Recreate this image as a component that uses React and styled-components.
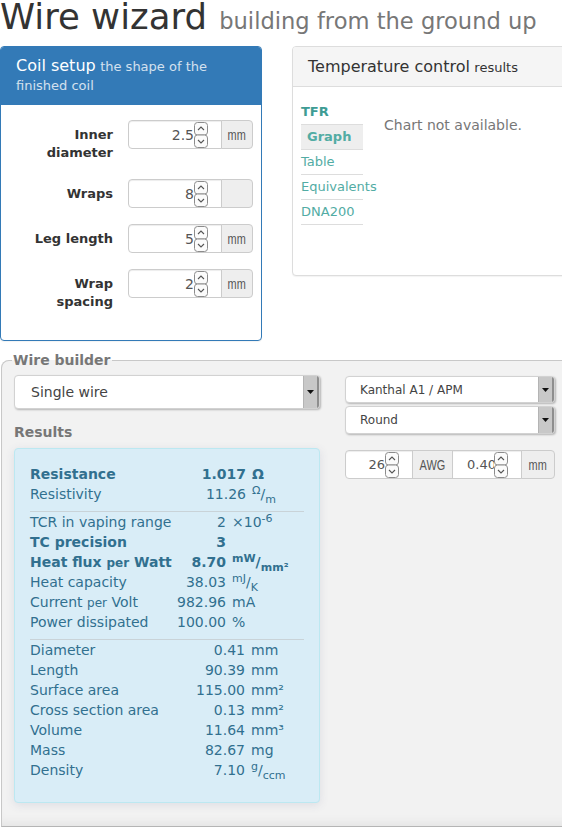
import React from 'react';
import styled, {createGlobalStyle} from 'styled-components';

const GlobalStyle = createGlobalStyle`
    html, body {
        margin: 0;
        padding: 0;
        overflow: hidden;
        background: #fff;
    }
    body {
        font-family: "DejaVu Sans", Verdana, sans-serif;
        font-size: 14px;
        color: #333;
    }
    * {
        box-sizing: border-box;
    }
`;

const Page = styled.div`
    width: 570px;
`;

const Title = styled.h1`
    height: 34px;
    margin: 0 0 12px;
    font-size: 35.5px;
    font-weight: normal;
    line-height: 34px;
    color: #333;
    white-space: nowrap;
`;

const Subtitle = styled.small`
    margin-left: 1px;
    font-size: 22.6px;
    line-height: 1;
    color: #777;
`;

const TopRow = styled.div`
    display: flex;
    align-items: flex-start;
    gap: 30px;
`;

const Panel = styled.div`
    width: ${p => p.$width}px;
    border: 1px solid ${p => p.$border};
    border-radius: 4px;
    background: #fff;
    box-shadow: 0 1px 1px rgba(0, 0, 0, .05);
`;

const PanelHeading = styled.div`
    padding: 10px 15px 9px;
    background: ${p => p.$bg};
    color: ${p => p.$color};
    border-bottom: 1px solid ${p => p.$border};
    border-radius: 3px 3px 0 0;
    line-height: ${p => p.$lh}px;
`;

const PanelTitle = styled.span`
    font-size: 16px;
`;

const PanelNote = styled.span`
    font-size: 13px;
    opacity: ${p => p.$faded ? 0.78 : 1};
`;

const CoilBody = styled.div`
    padding: 15px 8px 12px 0;
`;

const FormRow = styled.div`
    display: grid;
    grid-template-columns: 127px 125px;
    margin-bottom: 16px;
`;

const FormLabel = styled.label`
    padding: 6px 15px 1px 0;
    text-align: right;
    font-size: 13px;
    font-weight: bold;
    line-height: 18px;
    color: #333;
`;

const InputGroup = styled.div`
    display: flex;
    height: 29px;
    margin-top: ${p => p.$mt || 0}px;
`;

const NumberField = styled.div`
    display: flex;
    align-items: center;
    width: ${p => p.$w}px;
    padding: 0 13px 0 ${p => p.$pl}px;
    background: #fff;
    border: 1px solid #ccc;
    border-radius: ${p => p.$first ? '4px 0 0 4px' : '0'};
    margin-left: ${p => p.$first ? 0 : -1}px;
    font-size: ${p => p.$fs}px;
    color: #555;
    box-shadow: inset 0 1px 1px rgba(0, 0, 0, .075);
`;

const NumberValue = styled.span`
    flex: 1;
    min-width: 0;
    overflow: hidden;
    white-space: nowrap;
    text-align: right;
`;

const Addon = styled.span`
    display: flex;
    align-items: center;
    justify-content: center;
    width: ${p => p.$w}px;
    margin-left: -1px;
    background: #eee;
    border: 1px solid #ccc;
    border-radius: ${p => p.$last ? '0 4px 4px 0' : '0'};
    font-family: "Liberation Sans", Arial, sans-serif;
    font-size: 14px;
    color: #555;
`;

const NarrowText = styled.span`
    display: inline-block;
    transform: scaleX(.78);
`;

const TempBody = styled.div`
    display: flex;
    height: 188px;
    padding: 13px 8px 0;
`;

const PillNav = styled.ul`
    list-style: none;
    margin: 0;
    padding: 0;
    width: 62px;
    flex-shrink: 0;
`;

const Pill = styled.li`
    padding: 3px 0 3px ${p => p.$active ? 6 : 0}px;
    line-height: 18px;
    font-size: 13px;
    white-space: nowrap;
    font-weight: ${p => p.$bold ? 'bold' : 'normal'};
    color: ${p => p.$head ? '#3e9c94' : '#52aca4'};
    background: ${p => p.$active ? '#eee' : 'transparent'};
    border-bottom: 1px solid #ddd;
`;

const ChartNote = styled.div`
    margin-left: 21px;
    padding-top: 15px;
    line-height: 20px;
    color: #777;
    white-space: nowrap;
`;

const Fieldset = styled.fieldset`
    width: 570px;
    min-width: 0;
    margin: 9px 0 0 1px;
    padding: 5px 15px 23px 12px;
    border: 1px solid #c8c8c8;
    border-bottom-color: #b5b5b5;
    border-radius: 8px 0 0 0;
    background: #f2f2f2;
    box-shadow: inset 0 -10px 12px -8px rgba(0, 0, 0, .07);
`;

const Legend = styled.legend`
    margin-left: -2px;
    padding: 0 1px;
    font-size: 14px;
    font-weight: bold;
    line-height: 20px;
    color: #777;
`;

const BuilderGrid = styled.div`
    display: grid;
    grid-template-columns: 306px 210px;
    column-gap: 25px;
    align-items: start;
`;

const Column = styled.div`
    display: flex;
    flex-direction: column;
`;

const SelectBox = styled.div`
    display: flex;
    align-items: stretch;
    height: ${p => p.$h}px;
    margin-top: ${p => p.$mt || 0}px;
    background: #fff;
    border: 1px solid #d2d2d2;
    border-radius: 4px;
    box-shadow: 1px 1px 2px rgba(0, 0, 0, .25);
    overflow: hidden;
    font-size: ${p => p.$fs}px;
    color: #444;
`;

const SelectText = styled.span`
    flex: 1;
    display: flex;
    align-items: center;
    padding-left: ${p => p.$pl}px;
`;

const SelectArrow = styled.span`
    display: flex;
    align-items: center;
    justify-content: center;
    width: 16px;
    background: #c8c8c8;
    border-left: 1px solid #b4b4b4;
    border-right: 2px solid #8e8e8e;
`;

const SectionLabel = styled.div`
    margin-top: 13px;
    font-size: 14px;
    font-weight: bold;
    line-height: 20px;
    color: #777;
`;

const Well = styled.div`
    margin-top: 6px;
    padding: 15px 15px 22px;
    background: #d9edf7;
    border: 1px solid #bce8f1;
    border-radius: 4px;
    color: #31708f;
    box-shadow: 0 2px 10px rgba(70, 70, 120, .12);
`;

const ResultGroup = styled.div`
    display: grid;
    grid-template-columns: ${p => p.$cols};
    column-gap: 6px;
    border-top: ${p => p.$sep ? '1px solid #c9d3d8' : 'none'};
    margin-top: ${p => p.$sep ? 7 : 0}px;
`;

const Cell = styled.div`
    height: 20px;
    line-height: 20px;
    white-space: nowrap;
    font-weight: ${p => p.$bold ? 'bold' : 'normal'};
    text-align: ${p => p.$right ? 'right' : 'left'};

    sup, sub {
        font-size: 11px;
        line-height: 0;
    }
    sup {
        vertical-align: 5px;
    }
    sub {
        vertical-align: -4px;
    }
`;

const Per = styled.span`
    font-size: 12px;
`;

const Spinner = () => (
    <svg width="14" height="26" viewBox="0 0 14 26">
        <rect x="0.5" y="0.5" width="13" height="12.5" rx="3" fill="#fbfbfb" stroke="#8c8c8c"/>
        <rect x="0.5" y="13" width="13" height="12.5" rx="3" fill="#fbfbfb" stroke="#8c8c8c"/>
        <path d="M4 8 L7 5 L10 8" fill="none" stroke="#555" strokeWidth="1.1"/>
        <path d="M4 18 L7 21 L10 18" fill="none" stroke="#555" strokeWidth="1.1"/>
    </svg>
);

const Caret = () => (
    <svg width="7" height="4" viewBox="0 0 7 4">
        <path d="M0 0 H7 L3.5 4 Z" fill="#111"/>
    </svg>
);

const coilRows = [
    {label: <>Inner<br/>diameter</>, value: '2.5', unit: 'mm'},
    {label: 'Wraps', value: '8', unit: ''},
    {label: 'Leg length', value: '5', unit: 'mm'},
    {label: <>Wrap<br/>spacing</>, value: '2', unit: 'mm'},
];

const frac = (top, bottom) => <><sup>{top}</sup>/<sub>{bottom}</sub></>;

const resultGroups = [
    {
        cols: '160px 50px auto',
        rows: [
            {label: 'Resistance', value: '1.017', unit: 'Ω', bold: true},
            {label: 'Resistivity', value: '11.26', unit: frac('Ω', 'm')},
        ],
    },
    {
        cols: '140px 50px auto',
        rows: [
            {label: 'TCR in vaping range', value: '2', unit: <>×10<sup>-6</sup></>},
            {label: 'TC precision', value: '3', unit: '', bold: true},
            {label: <>Heat flux <Per>per</Per> Watt</>, value: '8.70', unit: frac('mW', 'mm²'), bold: true},
            {label: 'Heat capacity', value: '38.03', unit: frac('mJ', 'K')},
            {label: <>Current <Per>per</Per> Volt</>, value: '982.96', unit: 'mA'},
            {label: 'Power dissipated', value: '100.00', unit: '%'},
        ],
    },
    {
        cols: '160px 49px auto',
        rows: [
            {label: 'Diameter', value: '0.41', unit: 'mm'},
            {label: 'Length', value: '90.39', unit: 'mm'},
            {label: 'Surface area', value: '115.00', unit: 'mm²'},
            {label: 'Cross section area', value: '0.13', unit: 'mm²'},
            {label: 'Volume', value: '11.64', unit: 'mm³'},
            {label: 'Mass', value: '82.67', unit: 'mg'},
            {label: 'Density', value: '7.10', unit: frac('g', 'ccm')},
        ],
    },
];

const pills = [
    {name: 'TFR', head: true, bold: true},
    {name: 'Graph', active: true, bold: true},
    {name: 'Table'},
    {name: 'Equivalents'},
    {name: 'DNA200'},
];

const Select = ({label, h, fs, pl, mt}) => (
    <SelectBox $h={h} $fs={fs} $mt={mt}>
        <SelectText $pl={pl}>{label}</SelectText>
        <SelectArrow><Caret/></SelectArrow>
    </SelectBox>
);

export default function App() {
    return (
        <Page>
            <GlobalStyle/>
            <Title>Wire wizard <Subtitle>building from the ground up</Subtitle></Title>

            <TopRow>
                <Panel $width={262} $border="#337ab7">
                    <PanelHeading $bg="#337ab7" $color="#fff" $border="#337ab7" $lh={18}>
                        <PanelTitle>Coil setup</PanelTitle> <PanelNote $faded>the shape of the finished coil</PanelNote>
                    </PanelHeading>
                    <CoilBody>
                        {coilRows.map((row, i) => (
                            <FormRow key={i}>
                                <FormLabel>{row.label}</FormLabel>
                                <InputGroup>
                                    <NumberField $w={94} $pl={12} $fs={14} $first>
                                        <NumberValue>{row.value}</NumberValue>
                                        <Spinner/>
                                    </NumberField>
                                    <Addon $w={32} $last><NarrowText>{row.unit}</NarrowText></Addon>
                                </InputGroup>
                            </FormRow>
                        ))}
                    </CoilBody>
                </Panel>

                <Panel $width={278} $border="#ddd">
                    <PanelHeading $bg="#f5f5f5" $color="#333" $border="#ddd" $lh={19}>
                        <PanelTitle>Temperature control</PanelTitle> <PanelNote>results</PanelNote>
                    </PanelHeading>
                    <TempBody>
                        <PillNav>
                            {pills.map(p => (
                                <Pill key={p.name} $head={p.head} $bold={p.bold} $active={p.active}>{p.name}</Pill>
                            ))}
                        </PillNav>
                        <ChartNote>Chart not available.</ChartNote>
                    </TempBody>
                </Panel>
            </TopRow>

            <Fieldset>
                <Legend>Wire builder</Legend>
                <BuilderGrid>
                    <Column>
                        <Select label="Single wire" h={34} fs={14} pl={16}/>
                        <SectionLabel>Results</SectionLabel>
                        <Well>
                            {resultGroups.map((group, gi) => (
                                <ResultGroup key={gi} $cols={group.cols} $sep={gi > 0}>
                                    {group.rows.map((row, ri) => (
                                        <React.Fragment key={ri}>
                                            <Cell $bold={row.bold}>{row.label}</Cell>
                                            <Cell $bold={row.bold} $right>{row.value}</Cell>
                                            <Cell $bold={row.bold}>{row.unit}</Cell>
                                        </React.Fragment>
                                    ))}
                                </ResultGroup>
                            ))}
                        </Well>
                    </Column>

                    <Column>
                        <Select label="Kanthal A1 / APM" h={27} fs={12} pl={14} mt={1}/>
                        <Select label="Round" h={28} fs={12} pl={14} mt={3}/>
                        <InputGroup $mt={16}>
                            <NumberField $w={68} $pl={12} $fs={13} $first>
                                <NumberValue>26</NumberValue>
                                <Spinner/>
                            </NumberField>
                            <Addon $w={41}><NarrowText>AWG</NarrowText></Addon>
                            <NumberField $w={70} $pl={14} $fs={13}>
                                <NumberValue>0.405</NumberValue>
                                <Spinner/>
                            </NumberField>
                            <Addon $w={34} $last><NarrowText>mm</NarrowText></Addon>
                        </InputGroup>
                    </Column>
                </BuilderGrid>
            </Fieldset>
        </Page>
    );
}
